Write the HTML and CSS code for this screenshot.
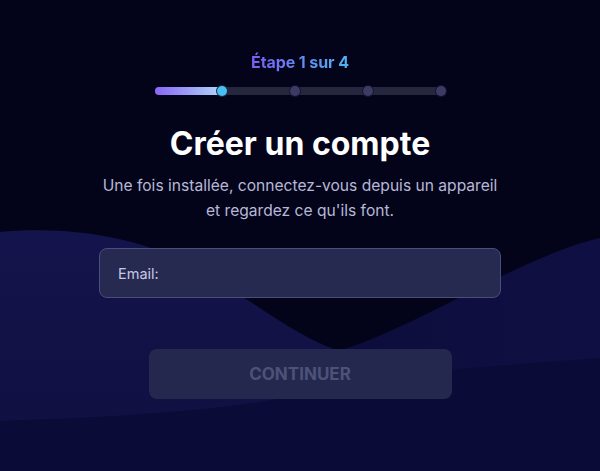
FILE: index.html
```html
<!DOCTYPE html>
<html lang="fr">
<head>
<meta charset="utf-8">
<title>Créer un compte</title>
<link rel="stylesheet" href="styles.css">
</head>
<body>
<div class="page">
  <svg class="waves" viewBox="0 0 600 471" preserveAspectRatio="none" aria-hidden="true">
    <defs>
      <linearGradient id="ga" x1="0" y1="0" x2="0" y2="1">
        <stop offset="0" stop-color="#14144c"/>
        <stop offset="1" stop-color="#0f0f40"/>
      </linearGradient>
      <linearGradient id="gb" x1="0" y1="0" x2="1" y2="0">
        <stop offset="0" stop-color="#0c0c3a"/>
        <stop offset="1" stop-color="#0f0f43"/>
      </linearGradient>
    </defs>
    <path d="M0,232 C40,228 95,230 145,246 C195,263 235,292 272,316 C300,334 322,346 345,353 L600,420 L600,471 L0,471 Z" fill="url(#ga)"/>
    <path d="M332,353 C380,340 450,302 500,277 C540,258 570,245 600,238 L600,471 L250,471 C280,430 300,375 332,353 Z" fill="url(#gb)"/>
    <path d="M0,421 C90,418 180,414 260,402 C320,392 350,380 390,375 C470,368 540,362 600,358 L600,471 L0,471 Z" fill="#0b0b38"/>
  </svg>

  <main class="main">
    <div class="step">Étape 1 sur 4</div>

    <div class="progress">
      <div class="progress-fill"></div>
      <span class="dot dot-active" style="left:67px"></span>
      <span class="dot" style="left:140px"></span>
      <span class="dot" style="left:213px"></span>
      <span class="dot" style="left:286px"></span>
    </div>

    <h1 class="title">Créer un compte</h1>
    <p class="subtitle">Une fois installée, connectez-vous depuis un appareil<br>et regardez ce qu'ils font.</p>

    <label class="field">
      <span class="field-label">Email:</span>
    </label>

    <button class="btn" type="button" disabled>CONTINUER</button>
  </main>
</div>
</body>
</html>
```

FILE: styles.css
```css
* {
  box-sizing: border-box;
}

html, body {
  margin: 0;
  padding: 0;
  background: #03041a;
}

body {
  font-family: "Inter", "Noto Sans", "Liberation Sans", sans-serif;
}

.page {
  position: relative;
  width: 600px;
  height: 471px;
  overflow: hidden;
  background: #03041a;
}

.waves {
  position: absolute;
  left: 0;
  top: 0;
  width: 600px;
  height: 471px;
  display: block;
}

.main {
  position: relative;
  display: flex;
  flex-direction: column;
  align-items: center;
  padding-top: 52px;
}

.step {
  font-size: 16px;
  font-weight: 700;
  line-height: 20px;
  letter-spacing: -0.1px;
  background: linear-gradient(90deg, #7c5cf3 0%, #4fb4f2 100%);
  -webkit-background-clip: text;
  background-clip: text;
  color: transparent;
}

.progress {
  position: relative;
  width: 290px;
  height: 8px;
  margin-top: 15px;
  border-radius: 4px;
  background: #25273f;
}

.progress-fill {
  width: 67px;
  height: 8px;
  border-radius: 4px 0 0 4px;
  background: linear-gradient(90deg, #8a66f6 0%, #b0d6f8 100%);
}

.dot {
  position: absolute;
  top: 50%;
  width: 10px;
  height: 10px;
  margin-left: -5px;
  margin-top: -5px;
  border-radius: 50%;
  background: #3b3b63;
  box-shadow: 0 0 0 1px #15162e;
}

.dot-active {
  background: #47bff3;
  box-shadow: 0 0 0 1px #1a2c4a;
}

.title {
  margin: 29px 0 0;
  font-size: 32px;
  font-weight: 700;
  line-height: 40px;
  color: #ffffff;
  letter-spacing: 0;
}

.subtitle {
  margin: 9px 0 0;
  font-size: 15.6px;
  line-height: 25px;
  color: #b7b8d6;
  text-align: center;
}

.field {
  display: flex;
  align-items: center;
  width: 402px;
  height: 50px;
  margin-top: 25px;
  padding: 0 18px;
  border: 1px solid #4a4e7a;
  border-radius: 8px;
  background: #262a50;
}

.field-label {
  font-size: 14.5px;
  color: #c6c8e6;
}

.btn {
  width: 303px;
  height: 50px;
  margin-top: 51px;
  border: none;
  border-radius: 8px;
  background: #24284e;
  color: #4d5278;
  font-family: inherit;
  font-size: 17px;
  font-weight: 700;
  letter-spacing: 0;
}
```
